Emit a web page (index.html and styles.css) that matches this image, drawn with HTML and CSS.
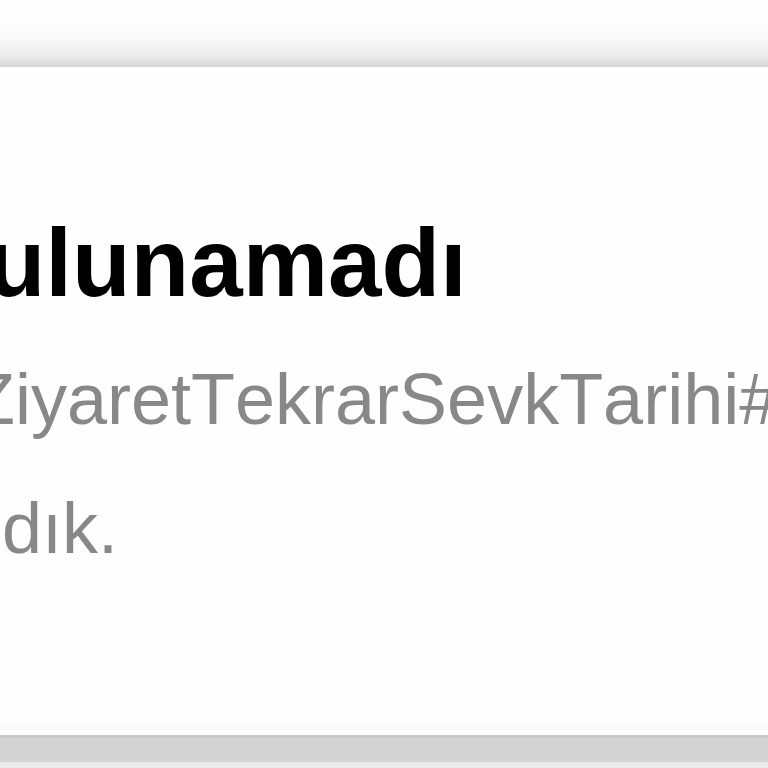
FILE: index.html
```html
<!DOCTYPE html>
<html lang="tr">
<head>
<meta charset="utf-8">
<title>Sayfa bulunamadı</title>
<link rel="stylesheet" href="styles.css">
</head>
<body>
<div class="topbar"></div>
<main class="card">
  <h1 class="title">bulunamadı</h1>
  <p class="path">ZiyaretTekrarSevkTarihi#/ZiyaretTekrarSevkTarihi</p>
  <p class="msg">dık.</p>
</main>
<div class="bottombar"></div>
</body>
</html>
```
FILE: styles.css
```css
html, body {
  margin: 0;
  padding: 0;
  background: #fefefe;
  overflow: hidden;
}
body {
  width: 768px;
  height: 768px;
  display: flex;
  flex-direction: column;
  font-family: "Liberation Sans", Arial, sans-serif;
  font-kerning: none;
}
.topbar {
  height: 65px;
  flex: none;
  background: linear-gradient(#fefefe 0px, #fefefe 22px, #fafafa 38px, #ececec 55px, #dadada 65px);
  border-bottom: 2px solid #d6d6d6;
  box-shadow: 0 1px 0 #ececec;
}
.card {
  flex: 1;
  background: #fefefe;
  padding-top: 143px;
  overflow: hidden;
  border-bottom: 11px solid #fafafa;
}
.title {
  margin: 0;
  font-size: 96px;
  line-height: 1.1;
  font-weight: bold;
  color: #000;
  white-space: nowrap;
  text-indent: -72px;
}
.path {
  margin: 40px 0 0;
  font-size: 72px;
  line-height: 1.2;
  color: #888;
  white-space: nowrap;
  text-indent: -29px;
}
.msg {
  margin: 43px 0 0;
  padding-left: 2px;
  font-size: 72px;
  line-height: 1.2;
  color: #888;
  white-space: nowrap;
}
.bottombar {
  flex: none;
  height: 24px;
  background: #d3d3d3;
  border-top: 3px solid #c8c8c8;
  border-bottom: 6px solid #ebebeb;
  box-shadow: 0 -5px 0 #fefefe;
}
```
